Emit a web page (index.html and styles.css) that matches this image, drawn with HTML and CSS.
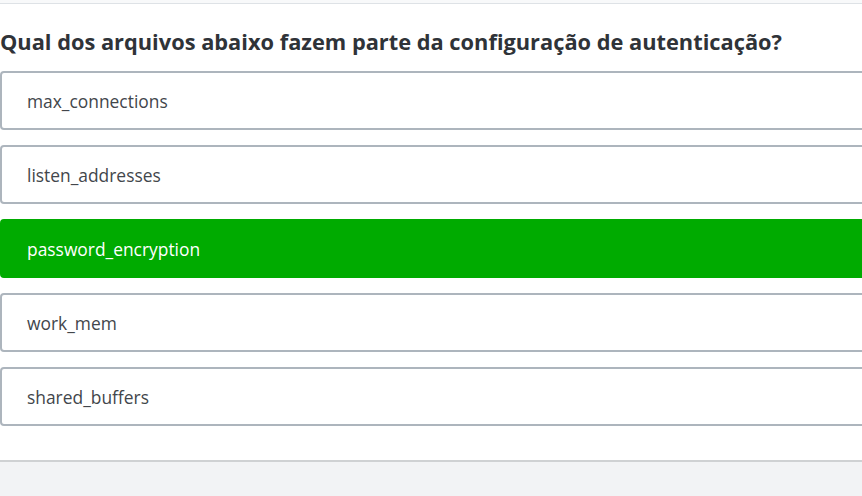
FILE: index.html
```html
<!DOCTYPE html>
<html lang="pt">
<head>
<meta charset="utf-8">
<link rel="stylesheet" href="styles.css">
</head>
<body>
<div class="topbar"></div>
<main class="quiz">
  <h2 class="question">Qual dos arquivos abaixo fazem parte da configuração de autenticação?</h2>
  <ul class="options">
    <li class="option">max_connections</li>
    <li class="option">listen_addresses</li>
    <li class="option correct">password_encryption</li>
    <li class="option">work_mem</li>
    <li class="option">shared_buffers</li>
  </ul>
</main>
<footer class="footer"></footer>
</body>
</html>
```
FILE: styles.css
```css
html, body {
  margin: 0;
  padding: 0;
  background: #ffffff;
  font-family: "Open Sans", "Liberation Sans", sans-serif;
  overflow: hidden;
}
.topbar {
  height: 3px;
  background: #f8f9fa;
  border-bottom: 1px solid #dee2e6;
}
.quiz {
  padding: 23px 0 34px 0;
}
.question {
  margin: 0 0 14px 0;
  font-size: 21.8px;
  line-height: 30px;
  font-weight: 700;
  color: #2f3338;
}
.options {
  list-style: none;
  margin: 0 -10px 0 0;
  padding: 0;
  display: flex;
  flex-direction: column;
  gap: 15px;
}
.option {
  height: 55px;
  display: flex;
  align-items: center;
  padding: 0 25px;
  border: 2px solid #adb5bd;
  border-radius: 4px;
  font-size: 17.4px;
  color: #42464b;
  background: #ffffff;
}
.option.correct {
  background: #00ab00;
  border-color: #00ab00;
  color: #ffffff;
}
.footer {
  border-top: 2px solid #cfd1d3;
  background: #f2f3f5;
  height: 34px;
}
```
